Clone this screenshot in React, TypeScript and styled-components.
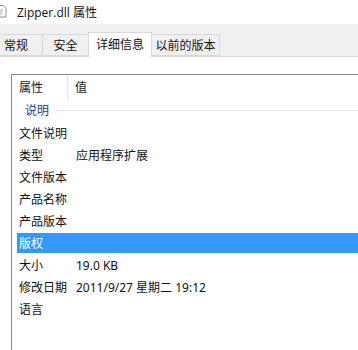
import React from 'react';
import styled, { createGlobalStyle } from 'styled-components';

const GlobalStyle = createGlobalStyle`
  html, body {
    margin: 0;
    padding: 0;
    background: #ffffff;
    overflow: hidden;
  }
  body {
    font-family: "Noto Sans", "Noto Sans CJK SC", sans-serif;
    font-size: 12px;
    color: #1a1a1a;
  }
`;

const cjk = `"Noto Sans", "Noto Sans CJK SC", sans-serif`;

type Row = { name: string; value?: string; selected?: boolean };

const rows: Row[] = [
  { name: '文件说明' },
  { name: '类型', value: '应用程序扩展' },
  { name: '文件版本' },
  { name: '产品名称' },
  { name: '产品版本' },
  { name: '版权', selected: true },
  { name: '大小', value: '19.0 KB' },
  { name: '修改日期', value: '2011/9/27 星期二 19:12' },
  { name: '语言' },
];

const tabs = [
  { label: '常规', width: 43, pad: 4 },
  { label: '安全', width: 47 },
  { label: '详细信息', width: 64, active: true },
  { label: '以前的版本', width: 69 },
];

const App = () => (
  <>
    <GlobalStyle />
    <Window>
      <TitleBar>
        <FileIcon viewBox="0 0 14 14">
          <path d="M0 1.5h8l3 3V13H0z" fill="#fff" stroke="#8a8f98" strokeWidth="1" />
          <path d="M2 6h6M2 8h6M2 10h5" stroke="#9fb3c8" strokeWidth="1" />
        </FileIcon>
        <Title>Zipper.dll 属性</Title>
      </TitleBar>
      <TabStrip>
        {tabs.map((t) => (
          <Tab key={t.label} $w={t.width} $active={!!t.active} $pad={t.pad}>
            {t.label}
          </Tab>
        ))}
      </TabStrip>
      <Panel>
        <ListBox>
          <Header>
            <NameCell>属性</NameCell>
            <HeaderSep />
            <ValueCell>值</ValueCell>
          </Header>
          <Group>
            <GroupLabel>说明</GroupLabel>
            <GroupLine />
          </Group>
          <Items>
            {rows.map((r) => (
              <ItemRow key={r.name} $selected={!!r.selected}>
                <NameCell>{r.name}</NameCell>
                <ValueCell>{r.value}</ValueCell>
              </ItemRow>
            ))}
          </Items>
        </ListBox>
      </Panel>
    </Window>
  </>
);

export default App;

const Window = styled.div`
  width: 358px;
  height: 350px;
  display: flex;
  flex-direction: column;
  background: #ffffff;
  overflow: hidden;
`;

const TitleBar = styled.div`
  height: 24px;
  display: flex;
  align-items: center;
  background: #ffffff;
`;

const FileIcon = styled.svg`
  width: 14px;
  height: 14px;
  margin-left: -5px;
  margin-top: -3px;
`;

const Title = styled.span`
  margin-left: 8px;
  margin-top: -1px;
  font-family: "Open Sans", "Noto Sans CJK SC", sans-serif;
  font-size: 12px;
  color: #111;
`;

const TabStrip = styled.div`
  height: 33px;
  display: flex;
  align-items: flex-end;
  background: #f0f0f0;
  border-bottom: 1px solid #d9d9d9;
  box-sizing: border-box;
`;

const Tab = styled.div<{ $w: number; $active: boolean; $pad?: number }>`
  width: ${({ $w }) => $w}px;
  height: ${({ $active }) => ($active ? 25 : 22)}px;
  margin-bottom: ${({ $active }) => ($active ? -1 : 0)}px;
  box-sizing: border-box;
  display: flex;
  align-items: center;
  justify-content: ${({ $pad }) => ($pad !== undefined ? 'flex-start' : 'center')};
  padding-left: ${({ $pad }) => $pad ?? 0}px;
  padding-bottom: ${({ $active }) => ($active ? 2 : 0)}px;
  font-family: ${cjk};
  font-size: 12px;
  color: #111;
  background: ${({ $active }) => ($active ? '#ffffff' : '#f0f0f0')};
  border: 1px solid #d9d9d9;
  border-bottom: ${({ $active }) => ($active ? 'none' : '1px solid #d9d9d9')};
  border-left: ${({ $pad }) => ($pad !== undefined ? 'none' : '1px solid #d9d9d9')};
  margin-right: -1px;
  position: relative;
  z-index: ${({ $active }) => ($active ? 1 : 0)};
`;

const Panel = styled.div`
  flex: 1;
  background: #ffffff;
  padding: 17px 0 0 11px;
`;

const ListBox = styled.div`
  height: 100%;
  border-top: 1px solid #828790;
  border-left: 1px solid #828790;
  display: flex;
  flex-direction: column;
  font-family: ${cjk};
  font-size: 12px;
`;

const Header = styled.div`
  height: 24px;
  display: flex;
  align-items: center;
`;

const HeaderSep = styled.div`
  width: 1px;
  align-self: stretch;
  background: #e5e5e5;
  margin-left: -8px;
  margin-right: 7px;
`;

const NameCell = styled.span`
  width: 56px;
  padding-left: 7px;
  flex-shrink: 0;
  white-space: nowrap;
`;

const ValueCell = styled.span`
  white-space: nowrap;
`;

const Group = styled.div`
  height: 22px;
  display: flex;
  align-items: center;
  padding-left: 13px;
`;

const GroupLabel = styled.span`
  color: #1e3c9a;
`;

const GroupLine = styled.div`
  flex: 1;
  height: 1px;
  background: #e2e6ee;
  margin-left: 7px;
`;

const Items = styled.div`
  display: flex;
  flex-direction: column;
  gap: 2px;
  padding: 2px 0 0 5px;
`;

const ItemRow = styled.div<{ $selected: boolean }>`
  height: 20px;
  display: flex;
  align-items: center;
  color: ${({ $selected }) => ($selected ? '#ffffff' : '#111')};
  background: ${({ $selected }) => ($selected ? '#3399ff' : 'transparent')};

  ${NameCell} {
    padding-left: 2px;
    width: 57px;
  }
`;
